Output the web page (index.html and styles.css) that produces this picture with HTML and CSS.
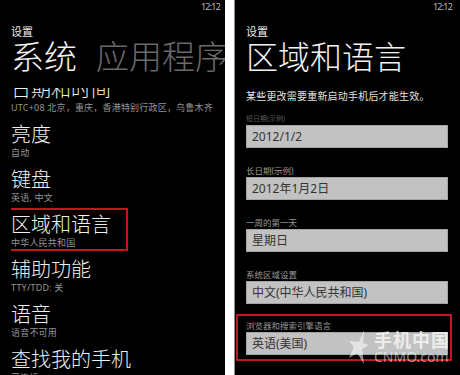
FILE: index.html
```html
<!DOCTYPE html>
<html lang="zh-CN">
<head>
<meta charset="utf-8">
<title>设置</title>
<link rel="stylesheet" href="styles.css">
</head>
<body>
<div class="screens">
  <section class="phone phone-system">
    <div class="status">12:12</div>
    <div class="app-title">设置</div>
    <div class="pivot"><span class="pivot-active">系统</span><span class="pivot-next">应用程序</span></div>
    <div class="list-viewport">
      <ul class="settings-list">
        <li class="item"><div class="item-title">日期和时间</div><div class="item-sub">UTC+08 北京，重庆，香港特别行政区，乌鲁木齐</div></li>
        <li class="item"><div class="item-title">亮度</div><div class="item-sub">自动</div></li>
        <li class="item"><div class="item-title">键盘</div><div class="item-sub">英语, 中文</div></li>
        <li class="item item-selected"><div class="item-title">区域和语言</div><div class="item-sub">中华人民共和国</div></li>
        <li class="item"><div class="item-title">辅助功能</div><div class="item-sub">TTY/TDD: 关</div></li>
        <li class="item"><div class="item-title">语音</div><div class="item-sub">语音不可用</div></li>
        <li class="item"><div class="item-title">查找我的手机</div><div class="item-sub">已连接</div></li>
      </ul>
    </div>
  </section>
  <section class="phone phone-region">
    <div class="status">12:12</div>
    <div class="app-title">设置</div>
    <div class="page-title">区域和语言</div>
    <p class="notice">某些更改需要重新启动手机后才能生效。</p>
    <div class="field">
      <div class="field-label field-label-faint">短日期(示例)</div>
      <div class="field-box">2012/1/2</div>
    </div>
    <div class="field">
      <div class="field-label">长日期(示例)</div>
      <div class="field-box">2012年1月2日</div>
    </div>
    <div class="field">
      <div class="field-label">一周的第一天</div>
      <div class="field-box">星期日</div>
    </div>
    <div class="field">
      <div class="field-label">系统区域设置</div>
      <div class="field-box">中文(中华人民共和国)</div>
    </div>
    <div class="field field-selected">
      <div class="field-label">浏览器和搜索引擎语言</div>
      <div class="field-box">英语(美国)</div>
    </div>
    <div class="watermark">
      <svg class="wm-logo" width="20" height="34" viewBox="0 0 20 34">
        <polygon points="15,0 14,13 20,15 13,19 15,34 8,23 0,28 5,17 0,11 10,12" fill="rgba(255,255,255,0.55)"/>
      </svg>
      <div class="wm-text">
        <div class="wm-cn">手机中国</div>
        <div class="wm-en">CNMO.com</div>
      </div>
    </div>
  </section>
</div>
</body>
</html>
```

FILE: styles.css
```css
html, body {
  margin: 0;
  padding: 0;
  background: #ffffff;
}

body {
  width: 460px;
  height: 375px;
  overflow: hidden;
  font-family: "Noto Sans", "Noto Sans CJK SC", sans-serif;
}

.screens {
  display: flex;
  gap: 9px;
  height: 375px;
}

.phone {
  background: #000000;
  color: #f2f2f2;
  height: 375px;
  overflow: hidden;
  display: flex;
  flex-direction: column;
  box-sizing: border-box;
}

.phone-system {
  width: 225px;
  padding-left: 11px;
}

.phone-region {
  width: 226px;
  border-left: 1px solid #8a8a8a;
  padding: 0 12px 0 11px;
  position: relative;
}

.status {
  height: 14px;
  line-height: 14px;
  font-size: 9px;
  letter-spacing: -0.8px;
  color: #bdbdbd;
  text-align: right;
  padding-right: 5px;
}

.phone-region .status {
  padding-right: 0;
  margin-right: -4px;
}

.app-title {
  margin-top: 11px;
  font-size: 11px;
  line-height: 13px;
  color: #ececec;
}

.pivot {
  font-size: 33px;
  line-height: 38px;
  font-weight: 300;
  white-space: nowrap;
}

.pivot-next {
  margin-left: 19px;
  color: #6a6a6a;
}

.list-viewport {
  margin-top: 12px;
  flex: 1;
  overflow: hidden;
}

.settings-list {
  list-style: none;
  margin: -10px 0 0 0;
  padding: 0;
}

.item {
  margin-bottom: 10px;
}

.item-title {
  font-size: 20px;
  line-height: 24px;
  font-weight: 300;
  color: #f0f0f0;
  white-space: nowrap;
}

.item-sub {
  font-size: 9px;
  line-height: 11px;
  color: #959595;
  white-space: nowrap;
  letter-spacing: 0.2px;
}

.item-selected {
  box-sizing: border-box;
  width: 126px;
  margin: -5px 0 7px -9px;
  padding: 3px 0 1px 7px;
  border: 2px solid #c2161d;
}

.page-title {
  font-size: 32px;
  line-height: 38px;
  font-weight: 300;
  white-space: nowrap;
}

.notice {
  margin: 14px 0 0 0;
  font-size: 10px;
  line-height: 13px;
  color: #e2e2e2;
  white-space: nowrap;
  letter-spacing: 0.2px;
}

.field {
  margin-bottom: 17px;
}

.notice + .field {
  margin-top: 10px;
}

.field-label {
  font-size: 8.5px;
  line-height: 12px;
  color: #9a9a9a;
  white-space: nowrap;
}

.field-label-faint {
  color: #5a5a5a;
  font-size: 7px;
}

.field-box {
  box-sizing: border-box;
  height: 23px;
  border: 1px solid #a4a4a4;
  background: #c2c2c2;
  color: #333333;
  font-size: 12px;
  line-height: 21px;
  padding: 0 5px;
  white-space: nowrap;
}

.field-selected {
  margin: -7px -4px 0 -10px;
  padding: 4px 2px 4px 8px;
  border: 2px solid #c2161d;
}

.watermark {
  position: absolute;
  left: 114px;
  top: 330px;
  display: flex;
  align-items: flex-start;
  gap: 5px;
  pointer-events: none;
}

.wm-text {
  display: flex;
  flex-direction: column;
}

.wm-cn {
  font-size: 18px;
  line-height: 20px;
  font-weight: 700;
  color: rgba(255, 255, 255, 0.72);
  letter-spacing: 1px;
}

.wm-en {
  font-size: 14px;
  line-height: 14px;
  color: rgba(255, 255, 255, 0.55);
}
```
